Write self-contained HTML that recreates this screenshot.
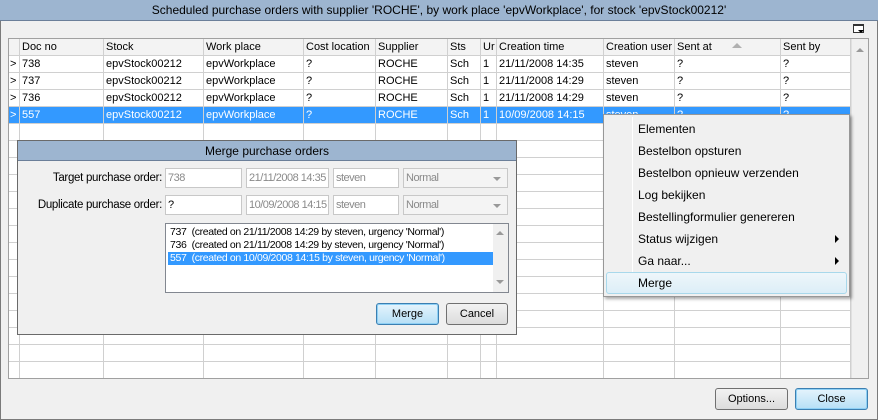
<!DOCTYPE html>
<html><head><style>
*{margin:0;padding:0;box-sizing:border-box}
body{width:878px;height:420px;background:#f0f0f0;font-family:"Liberation Sans",sans-serif;font-size:11px;color:#000;position:relative;overflow:hidden}
.abs{position:absolute}
.win{left:0;top:0;width:878px;height:420px;border:1px solid #7a7a7a;border-top:none}
.title{left:0;top:0;width:878px;height:21px;background:#9db5d0;border-bottom:1px solid #6b7f99;text-align:center;line-height:21px;font-size:12px}
.grid{left:8px;top:38px;width:861px;height:341px;border:1px solid #a0a0a0;background:#fff;overflow:hidden}
.cell{position:absolute;height:17px;line-height:17px;padding-left:2px;white-space:nowrap;overflow:hidden;border-right:1px solid #d0d0d0;border-bottom:1px solid #d0d0d0}
.hdr{background:#f3f3f3}
.sel{background:#3399ff;color:#fff}
.field{position:absolute;height:20px;border:1px solid #c8c8c8;background:#fff;color:#8a8a8a;line-height:18px;padding-left:2px;font-size:11px;white-space:nowrap;overflow:hidden;letter-spacing:-0.5px}
.btn{position:absolute;height:22px;border:1px solid #707070;border-radius:3px;background:linear-gradient(#f2f2f2,#dcdcdc);text-align:center;line-height:20px;font-size:11px}
.btn.def{border-color:#3c7fb1;background:linear-gradient(#e5f4fc,#b6dff6);box-shadow:inset 0 0 0 1px #8ed0f5}
.mi{position:absolute;left:34px;height:22px;line-height:22px;font-size:12px}
.arr{position:absolute;right:10px;width:0;height:0;border-left:4px solid #000;border-top:4px solid transparent;border-bottom:4px solid transparent}
.lb{position:absolute;font-size:11.5px;letter-spacing:-0.3px;white-space:nowrap}
.li{padding-left:2px;height:13px;line-height:13px;font-size:10.5px;letter-spacing:-0.35px;white-space:nowrap}
</style></head><body>
<div class="abs win"></div>
<div class="abs title">Scheduled purchase orders with supplier 'ROCHE', by work place 'epvWorkplace', for stock 'epvStock00212'</div>
<div class="abs" style="left:853px;top:24px;width:11px;height:9px;border:1px solid #333;background:#fff;border-top-width:2px"></div>
<div class="abs" style="left:858px;top:30px;border-left:3px solid transparent;border-right:3px solid transparent;border-top:3px solid #000"></div>

<div class="abs grid" id="g"></div>
<script>
var cols=[0,11,95,195,295,367,439,472,488,595,666,772,842];
var hd=["","Doc no","Stock","Work place","Cost location","Supplier","Sts","Ur","Creation time","Creation user","Sent at","Sent by"];
var rows=[["738","21/11/2008 14:35"],["737","21/11/2008 14:29"],["736","21/11/2008 14:29"],["557","10/09/2008 14:15"]];
var h="";
for(var r=0;r<20;r++){
 for(var c=0;c<12;c++){
  var t="",cls="cell";
  if(r==0){t=hd[c];cls+=" hdr";}
  else if(r<=4){var d=rows[r-1];t=[">",d[0],"epvStock00212","epvWorkplace","?","ROCHE","Sch","1",d[1],"steven","?","?"][c];if(r==4)cls+=" sel";}
  h+='<div class="'+cls+'" style="left:'+cols[c]+'px;top:'+(r*17)+'px;width:'+(cols[c+1]-cols[c])+'px;'+(c==0?'padding-left:1px;':'')+'">'+t+'</div>';
 }
}
h+='<div style="position:absolute;left:723px;top:4px;border-left:5px solid transparent;border-right:5px solid transparent;border-bottom:5px solid #b0b0b0"></div>';
h+='<div style="position:absolute;left:842px;top:0;width:18px;height:341px;background:#f0f0f0;border-left:1px solid #e0e0e0"></div>';
h+='<div style="position:absolute;left:847px;top:9px;border-left:4px solid transparent;border-right:4px solid transparent;border-bottom:4px solid #999"></div>';
document.getElementById("g").innerHTML=h;
</script>

<!-- dialog -->
<div class="abs" style="left:17px;top:140px;width:500px;height:195px;border:1px solid #6a6a6a;background:#f0f0f0">
 <div style="height:20px;background:#9db5d0;border-bottom:1px solid #6b7f99;text-align:center;line-height:20px;font-size:12px">Merge purchase orders</div>
 <div class="lb" style="right:354px;top:31px">Target purchase order:</div>
 <div class="lb" style="right:354px;top:58px">Duplicate purchase order:</div>
 <div class="field" style="left:147px;top:27px;width:77px">738</div>
 <div class="field" style="left:228px;top:27px;width:83px">21/11/2008 14:35</div>
 <div class="field" style="left:315px;top:27px;width:66px">steven</div>
 <div class="field" style="left:385px;top:27px;width:105px;background:#f4f4f4">Normal<span style="position:absolute;right:6px;top:8px;border-left:4px solid transparent;border-right:4px solid transparent;border-top:4px solid #999"></span></div>
 <div class="field" style="left:147px;top:54px;width:77px;color:#000">?</div>
 <div class="field" style="left:228px;top:54px;width:83px">10/09/2008 14:15</div>
 <div class="field" style="left:315px;top:54px;width:66px">steven</div>
 <div class="field" style="left:385px;top:54px;width:105px;background:#f4f4f4">Normal<span style="position:absolute;right:6px;top:8px;border-left:4px solid transparent;border-right:4px solid transparent;border-top:4px solid #999"></span></div>
 <div class="abs" style="left:147px;top:82px;width:344px;height:70px;border:1px solid #828790;background:#fff;padding:2px">
  <div class="li">737&nbsp; (created on 21/11/2008 14:29 by steven, urgency 'Normal')</div>
  <div class="li">736&nbsp; (created on 21/11/2008 14:29 by steven, urgency 'Normal')</div>
  <div class="li" style="background:#3399ff;color:#fff;width:326px">557&nbsp; (created on 10/09/2008 14:15 by steven, urgency 'Normal')</div>
  <div style="position:absolute;right:0;top:0;width:15px;height:68px;background:#f0f0f0"></div>
  <div style="position:absolute;right:4px;top:7px;border-left:4px solid transparent;border-right:4px solid transparent;border-bottom:4px solid #999"></div>
  <div style="position:absolute;right:4px;top:56px;border-left:4px solid transparent;border-right:4px solid transparent;border-top:4px solid #999"></div>
 </div>
 <div class="btn def" style="left:358px;top:162px;width:63px">Merge</div>
 <div class="btn" style="left:428px;top:162px;width:62px">Cancel</div>
</div>

<!-- context menu -->
<div class="abs" style="left:603px;top:114px;width:247px;height:183px;border:1px solid #979797;background:#f0f0f0;box-shadow:2px 2px 3px rgba(0,0,0,.35)">
 <div class="abs" style="left:28px;top:2px;width:1px;height:177px;background:#e2e3e3;border-right:1px solid #fff"></div>
 <div class="abs" style="left:2px;top:157px;width:241px;height:22px;border:1px solid #a8d8eb;border-radius:3px;background:linear-gradient(#eef6fa,#dceef7)"></div>
 <div class="mi" style="top:3px">Elementen</div>
 <div class="mi" style="top:25px">Bestelbon opsturen</div>
 <div class="mi" style="top:47px">Bestelbon opnieuw verzenden</div>
 <div class="mi" style="top:69px">Log bekijken</div>
 <div class="mi" style="top:91px">Bestellingformulier genereren</div>
 <div class="mi" style="top:113px">Status wijzigen</div><div class="arr" style="top:120px"></div>
 <div class="mi" style="top:135px">Ga naar...</div><div class="arr" style="top:142px"></div>
 <div class="mi" style="top:157px">Merge</div>
</div>

<div class="btn" style="left:715px;top:388px;width:73px">Options...</div>
<div class="btn def" style="left:795px;top:388px;width:73px">Close</div>
</body></html>
